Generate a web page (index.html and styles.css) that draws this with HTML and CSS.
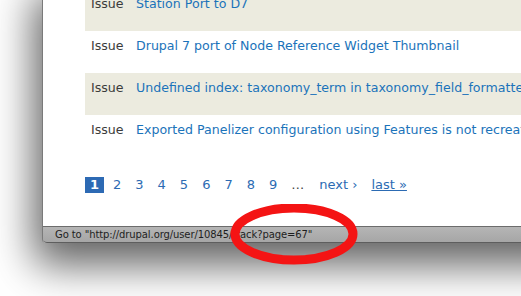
FILE: index.html
```html
<!DOCTYPE html>
<html>
<head>
<meta charset="utf-8">
<link rel="stylesheet" href="styles.css">
</head>
<body>
<div class="desk">
  <div class="window">
    <div class="content">
      <table class="tracker">
        <colgroup><col class="c-type"><col class="c-title"></colgroup>
        <tr class="odd"><td class="type">Issue</td><td><a href="#">Station Port to D7</a></td></tr>
        <tr class="even"><td class="type">Issue</td><td><a href="#">Drupal 7 port of Node Reference Widget Thumbnail</a></td></tr>
        <tr class="odd"><td class="type">Issue</td><td><a href="#">Undefined index: taxonomy_term in taxonomy_field_formatter_view()</a></td></tr>
        <tr class="even"><td class="type">Issue</td><td><a href="#">Exported Panelizer configuration using Features is not recreated</a></td></tr>
      </table>
      <ul class="pager">
        <li class="current">1</li>
        <li><a href="#">2</a></li>
        <li><a href="#">3</a></li>
        <li><a href="#">4</a></li>
        <li><a href="#">5</a></li>
        <li><a href="#">6</a></li>
        <li><a href="#">7</a></li>
        <li><a href="#">8</a></li>
        <li><a href="#">9</a></li>
        <li class="ellipsis">…</li>
        <li><a href="#">next ›</a></li>
        <li><a href="#" class="last">last »</a></li>
      </ul>
    </div>
    <div class="status">Go to "http://drupal.org/user/10845/track?page=67"</div>
  </div>
  <svg class="circle" width="140" height="70" viewBox="0 0 140 70">
    <ellipse cx="64" cy="30" rx="59" ry="26" fill="none" stroke="#f41414" stroke-width="9"/>
  </svg>
</div>
</body>
</html>
```

FILE: styles.css
```css
html, body {
  margin: 0;
  padding: 0;
  background: #ffffff;
  width: 521px;
  height: 296px;
  overflow: hidden;
}
.desk {
  position: relative;
  width: 521px;
  height: 296px;
  overflow: hidden;
  background: #fff;
}
.window {
  margin-left: 42px;
  margin-top: -11px;
  width: 520px;
  background: #fff;
  border-left: 1px solid #7a7a7a;
  border-bottom-left-radius: 4px;
  box-shadow: 0 14px 42px 8px rgba(0,0,0,0.62);
  font-family: "DejaVu Sans", sans-serif;
}
.content {
  height: 237px;
  padding-left: 42px;
  box-sizing: border-box;
}
.tracker {
  border-collapse: collapse;
  table-layout: fixed;
  width: 478px;
  font-size: 12.6px;
}
.c-type { width: 51px; }
.tracker td {
  height: 42px;
  padding: 7px 0 0 6px;
  vertical-align: top;
  box-sizing: border-box;
  white-space: nowrap;
  overflow: visible;
}
.tracker td + td { padding-left: 0; }
.tracker td.type {
  color: #3b3b3b;
}
.tracker tr.odd { background: #ecebdf; }
.tracker a {
  color: #1b73ba;
  text-decoration: none;
}
.pager {
  list-style: none;
  margin: 20px 0 0 0;
  padding: 0;
  display: flex;
  align-items: center;
  font-size: 13px;
  height: 16px;
}
.pager li {
  margin-right: 14px;
  line-height: 16px;
}
.pager li a {
  color: #2c6bb3;
  text-decoration: none;
}
.pager li.current {
  background: #2d6ab4;
  color: #fff;
  font-weight: bold;
  width: 19px;
  text-align: center;
  margin-right: 9px;
}
.pager li.ellipsis { color: #444; margin-right: 15px; }
.pager a.last { text-decoration: underline; }
.status {
  height: 15px;
  border-top: 1px solid #6c6c6c;
  border-bottom: 1px solid #5e5e5e;
  border-bottom-left-radius: 4px;
  background: linear-gradient(#b5b5b5, #a6a6a6);
  font-size: 10px;
  letter-spacing: -0.1px;
  line-height: 15px;
  color: #1e1e1e;
  padding-left: 12px;
  white-space: nowrap;
}
.circle {
  position: absolute;
  left: 230px;
  top: 204px;
}
```
